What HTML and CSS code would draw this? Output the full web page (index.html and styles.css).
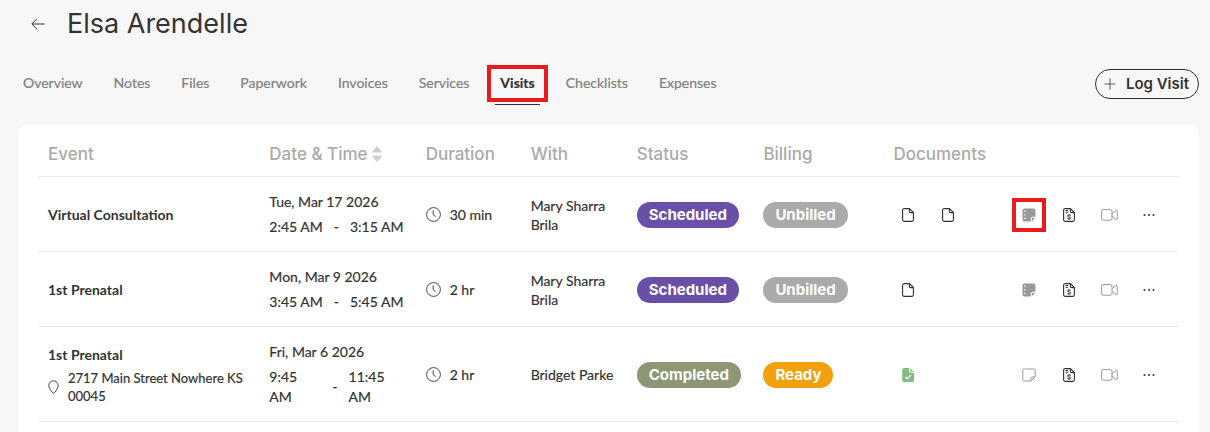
FILE: index.html
```html
<!DOCTYPE html>
<html lang="en">
<head>
    <meta charset="UTF-8">
    <meta name="viewport" content="width=device-width, initial-scale=1.0">
    <title>Elsa Arendelle - Visits</title>
    <link rel="stylesheet" href="styles.css">
</head>
<body>

<!-- Shared icons -->
<svg class="icon-defs" aria-hidden="true">
    <symbol id="icon-file" viewBox="0 0 12 14">
        <path d="M2.2.6h5.2l4 4v7.2a1.6 1.6 0 0 1-1.6 1.6H2.2a1.6 1.6 0 0 1-1.6-1.6V2.2A1.6 1.6 0 0 1 2.2.6zM7.4.8v2.6a1.2 1.2 0 0 0 1.2 1.2h2.6" fill="none" stroke="currentColor" stroke-width="1.1"/>
    </symbol>
    <symbol id="icon-file-check" viewBox="0 0 12 14">
        <path d="M2 0h5.2v3.4A1.4 1.4 0 0 0 8.6 4.8H12V12.4A1.6 1.6 0 0 1 10.4 14H2A1.8 1.8 0 0 1 .2 12.2V1.8A1.8 1.8 0 0 1 2 0zM8.2.2l3.6 3.6H8.2z" fill="currentColor"/>
        <path d="M3.3 8.7l2 2 3.6-3.6" fill="none" stroke="#fff" stroke-width="1.3"/>
    </symbol>
    <symbol id="icon-note-filled" viewBox="0 0 14 14">
        <path d="M2.5.5h9a2 2 0 0 1 2 2v6.3h-2.7a2 2 0 0 0-2 2v2.7H2.5a2 2 0 0 1-2-2v-9a2 2 0 0 1 2-2zM9.8 13.3V11A1.2 1.2 0 0 1 11 9.8h2.3z" fill="currentColor"/>
        <path d="M2.2 3.2h1.4M2.2 6.8h1.4M2.2 10.4h1.4" stroke="#fff" stroke-width="1.2"/>
    </symbol>
    <symbol id="icon-note" viewBox="0 0 14 14">
        <path d="M2.5 1h9a1.7 1.7 0 0 1 1.7 1.7v6.2L8.9 13H2.500A1.7 1.7 0 0 1 .8 11.3V2.7A1.7 1.7 0 0 1 2.5 1zM8.9 12.8v-2.3A1.5 1.5 0 0 1 10.4 9H13" fill="none" stroke="currentColor"/>
    </symbol>
    <symbol id="icon-invoice" viewBox="0 0 12 14">
        <path d="M2.2.6h5.2l4 4v7.2a1.6 1.6 0 0 1-1.6 1.6H2.2a1.6 1.6 0 0 1-1.6-1.6V2.2A1.6 1.6 0 0 1 2.2.6zM7.4.8v2.6a1.2 1.2 0 0 0 1.2 1.2h2.6M2.5 2.5h2.7M2.5 4.3h2.7" fill="none" stroke="currentColor" stroke-width="1.1"/>
        <path d="M7.7 7.7C7.4 6.9 4.5 6.7 4.5 8c0 1.4 3.2.6 3.2 2 0 1.3-3 1.1-3.4.2M6 6.1v1M6 11v1" fill="none" stroke="currentColor"/>
    </symbol>
    <symbol id="icon-video" viewBox="0 0 17 12">
        <rect x=".6" y=".6" width="10.4" height="10.6" rx="1.6" fill="none" stroke="currentColor"/>
        <path d="M11.2 4.8L15 1.6q1.3-.6 1.3.6v7.6q0 1.2-1.3.6l-3.8-3.2" fill="none" stroke="currentColor"/>
    </symbol>
    <symbol id="icon-dots" viewBox="0 0 12 4">
        <g fill="currentColor"><circle cx="1.5" cy="2" r="1"/><circle cx="6" cy="2" r="1"/><circle cx="10.5" cy="2" r="1"/></g>
    </symbol>
    <symbol id="icon-clock" viewBox="0 0 15 15">
        <path d="M7.5.6a6.9 6.9 0 1 1 0 13.8 6.9 6.9 0 0 1 0-13.8zM7.2 3.3v4.5l2.3 1.7" fill="none" stroke="currentColor" stroke-width=".9"/>
    </symbol>
    <symbol id="icon-pin" viewBox="0 0 11 14">
        <path d="M5.5.8c2.7 0 4.7 2 4.7 4.6 0 2-1.7 4.7-3.7 7.3q-1 1.1-2 0C2.5 10.1.8 7.4.8 5.4.8 2.8 2.8.8 5.5.8z" fill="none" stroke="currentColor" stroke-width=".9"/>
    </symbol>
</svg>

<header class="page-header">
    <a class="back" href="#" aria-label="Back">
        <svg width="14" height="12" viewBox="0 0 14 12"><path d="M13.5 6H1M6 .8L.8 6 6 11.2" fill="none" stroke="currentColor"/></svg>
    </a>
    <h1>Elsa Arendelle</h1>
</header>

<div class="toolbar">
    <nav class="tabs">
        <a href="#">Overview</a>
        <a href="#">Notes</a>
        <a href="#">Files</a>
        <a href="#">Paperwork</a>
        <a href="#">Invoices</a>
        <a href="#">Services</a>
        <a class="active" href="#">Visits<span class="highlight"></span></a>
        <a href="#">Checklists</a>
        <a href="#">Expenses</a>
    </nav>
    <button class="log-visit" type="button">
        <svg width="12" height="12" viewBox="0 0 12 12"><path d="M6 .5v11M.5 6h11" stroke="currentColor" stroke-width=".8"/></svg>
        Log Visit
    </button>
</div>

<main class="card">
    <table class="visits">
        <colgroup>
            <col class="col-event">
            <col class="col-date">
            <col class="col-duration">
            <col class="col-with">
            <col class="col-status">
            <col class="col-billing">
            <col class="col-documents">
            <col class="col-actions">
        </colgroup>
        <thead>
            <tr>
                <th>Event</th>
                <th>
                    <button class="sort" type="button">Date &amp; Time
                        <svg width="10" height="16" viewBox="0 0 10 16"><path d="M5 .5L9.5 6H.5zM5 15.5L9.5 10H.5z" fill="#d0d0d0" stroke="#d0d0d0" stroke-linejoin="round"/></svg>
                    </button>
                </th>
                <th>Duration</th>
                <th>With</th>
                <th>Status</th>
                <th>Billing</th>
                <th>Documents</th>
                <th></th>
            </tr>
        </thead>
        <tbody>
            <tr>
                <td><div class="event">Virtual Consultation</div></td>
                <td>
                    <div>Tue, Mar 17 2026</div>
                    <div class="time"><span>2:45 AM</span><span>-</span><span>3:15 AM</span></div>
                </td>
                <td><div class="duration"><svg width="15" height="15"><use href="#icon-clock"/></svg>30 min</div></td>
                <td class="with">Mary Sharra Brila</td>
                <td><span class="pill scheduled">Scheduled</span></td>
                <td><span class="pill unbilled">Unbilled</span></td>
                <td>
                    <div class="icons">
                        <button type="button" aria-label="Document"><svg width="12" height="14"><use href="#icon-file"/></svg></button>
                        <button type="button" aria-label="Document"><svg width="12" height="14"><use href="#icon-file"/></svg></button>
                    </div>
                </td>
                <td>
                    <div class="icons">
                        <button class="muted" type="button" aria-label="Note"><svg width="14" height="14"><use href="#icon-note-filled"/></svg><span class="highlight"></span></button>
                        <button type="button" aria-label="Invoice"><svg width="12" height="14"><use href="#icon-invoice"/></svg></button>
                        <button class="muted" type="button" aria-label="Video"><svg width="17" height="12"><use href="#icon-video"/></svg></button>
                        <button type="button" aria-label="More"><svg width="12" height="4"><use href="#icon-dots"/></svg></button>
                    </div>
                </td>
            </tr>
            <tr>
                <td><div class="event">1st Prenatal</div></td>
                <td>
                    <div>Mon, Mar 9 2026</div>
                    <div class="time"><span>3:45 AM</span><span>-</span><span>5:45 AM</span></div>
                </td>
                <td><div class="duration"><svg width="15" height="15"><use href="#icon-clock"/></svg>2 hr</div></td>
                <td class="with">Mary Sharra Brila</td>
                <td><span class="pill scheduled">Scheduled</span></td>
                <td><span class="pill unbilled">Unbilled</span></td>
                <td>
                    <div class="icons">
                        <button type="button" aria-label="Document"><svg width="12" height="14"><use href="#icon-file"/></svg></button>
                    </div>
                </td>
                <td>
                    <div class="icons">
                        <button class="muted" type="button" aria-label="Note"><svg width="14" height="14"><use href="#icon-note-filled"/></svg></button>
                        <button type="button" aria-label="Invoice"><svg width="12" height="14"><use href="#icon-invoice"/></svg></button>
                        <button class="muted" type="button" aria-label="Video"><svg width="17" height="12"><use href="#icon-video"/></svg></button>
                        <button type="button" aria-label="More"><svg width="12" height="4"><use href="#icon-dots"/></svg></button>
                    </div>
                </td>
            </tr>
            <tr>
                <td>
                    <div class="event">1st Prenatal</div>
                    <div class="address"><svg width="11" height="14"><use href="#icon-pin"/></svg><span>2717 Main Street Nowhere KS 00045</span></div>
                </td>
                <td>
                    <div>Fri, Mar 6 2026</div>
                    <div class="time stacked"><span>9:45<br>AM</span><span>-</span><span>11:45<br>AM</span></div>
                </td>
                <td><div class="duration"><svg width="15" height="15"><use href="#icon-clock"/></svg>2 hr</div></td>
                <td class="with">Bridget Parke</td>
                <td><span class="pill completed">Completed</span></td>
                <td><span class="pill ready">Ready</span></td>
                <td>
                    <div class="icons">
                        <button class="done" type="button" aria-label="Completed document"><svg width="12" height="14"><use href="#icon-file-check"/></svg></button>
                    </div>
                </td>
                <td>
                    <div class="icons">
                        <button class="muted" type="button" aria-label="Note"><svg width="14" height="14"><use href="#icon-note"/></svg></button>
                        <button type="button" aria-label="Invoice"><svg width="12" height="14"><use href="#icon-invoice"/></svg></button>
                        <button class="muted" type="button" aria-label="Video"><svg width="17" height="12"><use href="#icon-video"/></svg></button>
                        <button type="button" aria-label="More"><svg width="12" height="4"><use href="#icon-dots"/></svg></button>
                    </div>
                </td>
            </tr>
        </tbody>
    </table>
</main>

</body>
</html>
```

FILE: styles.css
```css
* {
    box-sizing: border-box;
}
body {
    margin: 0;
    min-height: 100vh;
    padding: 0 11px 0 18px;
    display: flex;
    flex-direction: column;
    background-color: #f7f7f7;
    color: #333333;
    font-family: Lato, "Open Sans", sans-serif;
    font-size: 14px;
    line-height: 20px;
}
a {
    color: inherit;
    text-decoration: none;
}
button {
    padding: 0;
    border: none;
    background: none;
    color: inherit;
    font: inherit;
    cursor: pointer;
}
svg {
    display: block;
    flex: none;
}
.icon-defs {
    position: absolute;
    width: 0;
    height: 0;
}

/* Header */
.page-header {
    display: flex;
    align-items: center;
    gap: 22px;
    height: 48px;
    padding-left: 13px;
}
h1 {
    margin: 0;
    font-family: Inter, sans-serif;
    font-size: 27px;
    font-weight: 400;
    line-height: 32px;
}
.toolbar {
    display: flex;
    justify-content: space-between;
    align-items: center;
    padding: 14px 0 20px;
}
.tabs {
    display: flex;
    gap: 21px;
    color: #808080;
}
.tabs a {
    position: relative;
    padding: 11px 5px;
    border-bottom: 1px solid transparent;
}
.tabs .active {
    color: #333333;
    font-weight: 700;
    border-bottom-color: #333333;
}
.log-visit {
    display: flex;
    align-items: center;
    gap: 10px;
    padding: 4px 9px 4px 8px;
    border: 1px solid #333333;
    border-radius: 15px;
    font-family: Inter, sans-serif;
    font-size: 15px;
    font-weight: 600;
}

/* Red callout frame */
.highlight {
    position: absolute;
    inset: 3px -8px 2px;
    border: 4px solid #e81c1c;
}

/* Visits table */
.card {
    flex: 1;
    padding: 8px 20px 0;
    background-color: #ffffff;
    border-radius: 8px 8px 0 0;
}
.visits {
    width: 100%;
    table-layout: fixed;
    border-collapse: separate;
    border-spacing: 0;
}
.col-event { width: 19.4%; }
.col-date { width: 13.7%; }
.col-duration { width: 9.2%; }
.col-with { width: 9.3%; }
.col-status { width: 11.1%; }
.col-billing { width: 11.4%; }
.col-documents { width: 10.6%; }
.visits th,
.visits td {
    padding: 15px 10px 14px;
    border-bottom: 1px solid #eaeaea;
    text-align: left;
    vertical-align: middle;
}
.visits td,
.tabs a {
    -webkit-text-stroke: 0.2px;
}
.visits th {
    padding: 11px 10px 12px;
    color: #aaaaaa;
    font-family: Inter, sans-serif;
    font-size: 17px;
    font-weight: 500;
    white-space: nowrap;
}
.sort {
    display: flex;
    align-items: center;
    gap: 4px;
}
.event {
    font-weight: 700;
    -webkit-text-stroke: 0;
}
.address {
    display: flex;
    align-items: center;
    gap: 9px;
    margin-top: 4px;
    font-size: 13px;
    line-height: 18px;
}
.time {
    display: flex;
    align-items: center;
    gap: 11px;
    margin-top: 5px;
    white-space: nowrap;
}
.stacked span:first-child {
    width: 52px;
}
.duration {
    display: flex;
    align-items: center;
    gap: 9px;
}
.visits .with {
    line-height: 19px;
}
.pill {
    display: inline-block;
    padding: 3px 12px;
    border-radius: 13px;
    color: #ffffff;
    font-family: Inter, sans-serif;
    font-size: 15px;
    font-weight: 700;
    -webkit-text-stroke: 0;
}
.scheduled { background-color: #694fa8; }
.completed { background-color: #8d9677; }
.unbilled { background-color: #aaaaaa; }
.ready { background-color: #f2a10d; }
.icons {
    display: flex;
    gap: 10px;
}
.icons button {
    position: relative;
    display: flex;
    justify-content: center;
    align-items: center;
    width: 30px;
    height: 30px;
}
.icons .muted {
    color: #999999;
}
.icons .done {
    color: #84bb84;
}
.icons .highlight {
    inset: -2px;
}
```
